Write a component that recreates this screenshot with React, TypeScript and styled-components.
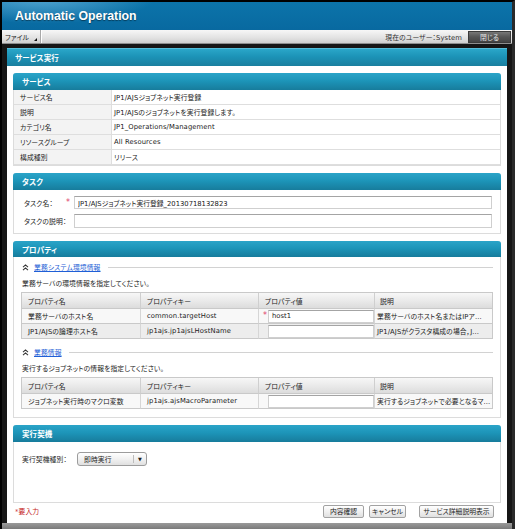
import React from 'react';
import styled, { createGlobalStyle } from 'styled-components';

const GlobalStyle = createGlobalStyle`
  html, body { margin: 0; padding: 0; background: #fff; }
  body {
    font-family: "DejaVu Sans", "Noto Sans CJK JP", sans-serif;
    font-size: 6.8px;
    letter-spacing: 0.1px;
    color: #222;
    font-feature-settings: "palt";
  }
  * { box-sizing: border-box; }
`;

const Frame = styled.div`
  width: 515px;
  height: 529px;
  background: #161616;
  border-top: 2px solid #000;
  border-left: 2px solid #000;
  border-right: 3px solid #2a2a2a;
  display: flex;
  flex-direction: column;
  overflow: hidden;
`;

const Header = styled.header`
  flex: none;
  height: 28px;
  display: flex;
  align-items: center;
  padding-left: 13px;
  background:
    radial-gradient(ellipse 150px 34px at 40px -4px, rgba(140, 205, 240, 0.55), rgba(140, 205, 240, 0) 75%),
    linear-gradient(180deg, #0c74aa 0%, #0869a0 100%);
`;

const Title = styled.h1`
  margin: 0;
  font: bold 12.3px "Liberation Sans", Arial, sans-serif;
  letter-spacing: 0;
  color: #fff;
  text-shadow: 0 1px 1px rgba(0, 0, 0, 0.45);
`;

const MenuBar = styled.div`
  flex: none;
  height: 14px;
  display: flex;
  align-items: stretch;
  background: linear-gradient(180deg, #f7f7f7 0%, #e2e2e2 60%, #cfcfcf 100%);
  border-bottom: 1px solid #8e8e8e;
`;

const MenuItem = styled.div`
  position: relative;
  width: 39px;
  display: flex;
  align-items: center;
  padding-left: 3px;
  color: #222;
  border-right: 1px solid #a8a8a8;
  box-shadow: 1px 0 0 #fff;
`;

const MenuArrow = styled.span`
  position: absolute;
  right: 3px;
  bottom: 2px;
  width: 0;
  height: 0;
  border-left: 3px solid transparent;
  border-bottom: 3px solid #111;
`;

const MenuSpacer = styled.div`
  flex: 1;
`;

const UserText = styled.div`
  display: flex;
  align-items: center;
  margin-right: 6px;
  color: #333;
`;

const CloseButton = styled.button`
  align-self: center;
  width: 43px;
  height: 12px;
  margin-right: 1px;
  padding: 0;
  font: inherit;
  color: #e8e8e8;
  border: 1px solid #3a3a3a;
  background: linear-gradient(180deg, #777 0%, #555 50%, #444 100%);
`;

const ContentArea = styled.div`
  flex: 1;
  display: flex;
  flex-direction: column;
  padding: 4px 5px 0 5px;
  min-height: 0;
`;

const Panel = styled.div`
  flex: 1;
  display: flex;
  flex-direction: column;
  background: #fff;
`;

const PanelTitle = styled.div`
  flex: none;
  height: 18px;
  display: flex;
  align-items: center;
  padding-left: 8px;
  color: #fff;
  font-size: 7.5px;
  font-weight: bold;
  background: linear-gradient(180deg, #2aa6c9 0%, #1c93b7 45%, #1a7f9f 100%);
  border-top: 1px solid #55bcd8;
`;

const PanelBody = styled.div`
  flex: 1;
  display: flex;
  flex-direction: column;
  gap: 7px;
  padding: 7px 6px 0;
`;

const Section = styled.section`
  border: 1px solid #dcdcdc;
  border-top: none;
  border-radius: 3px 3px 0 0;
  background: #fff;
`;

const SectionHeader = styled.div`
  height: 16.5px;
  margin: 0 -1px;
  display: flex;
  align-items: center;
  padding-left: 9px;
  color: #fff;
  font-size: 7.5px;
  font-weight: bold;
  border-radius: 3px 3px 0 0;
  background: linear-gradient(180deg, #2ba4c8 0%, #1d95b9 45%, #177c9c 100%);
`;

const InfoGrid = styled.div`
  display: grid;
  grid-template-columns: 98px 1fr;
`;

const InfoLabel = styled.div`
  height: 15.2px;
  display: flex;
  align-items: center;
  padding-left: 6px;
  white-space: nowrap;
  background: #f3f3f3;
  border-bottom: 1px solid #dedede;
  border-right: 1px solid #dedede;
`;

const InfoValue = styled.div`
  height: 15.2px;
  display: flex;
  align-items: center;
  padding-left: 2px;
  white-space: nowrap;
  border-bottom: 1px solid #dedede;
`;

const TaskBody = styled.div`
  display: flex;
  flex-direction: column;
  gap: 5px;
  padding: 6px 8px 5px 10px;
`;

const FormRow = styled.div`
  display: grid;
  grid-template-columns: 42px 8px 1fr;
  align-items: center;
`;

const FormLabel = styled.span`
  white-space: nowrap;
`;

const Asterisk = styled.span`
  color: #e0406a;
  font-size: 8px;
  line-height: 1;
`;

const TextInput = styled.input`
  width: 100%;
  height: 13.5px;
  padding: 0 3px;
  font: inherit;
  color: #222;
  background: #fff;
  border: 1px solid #cfcfcf;
  border-top-color: #a4a4a4;
  outline: none;
`;

const PropBody = styled.div`
  display: flex;
  flex-direction: column;
  padding: 4px 7px 8px 7px;
`;

const GroupHeader = styled.div<{ $top?: number }>`
  height: 12px;
  display: flex;
  align-items: center;
  margin-top: ${p => p.$top ?? 0}px;
  padding-left: 1px;
`;

const GroupLink = styled.a`
  margin-left: 5px;
  color: #1f5fd6;
  text-decoration: underline;
  cursor: pointer;
`;

const GroupLine = styled.div`
  flex: 1;
  height: 1px;
  margin-left: 7px;
  background: #d2d2d2;
`;

const GroupDesc = styled.div`
  height: 12px;
  display: flex;
  align-items: center;
  margin-top: 4px;
  padding-left: 1px;
`;

const PropTable = styled.div`
  display: grid;
  grid-template-columns: 119px 118px 116px 1fr;
  margin-top: 3px;
  border: 1px solid #c9c9c9;
  border-bottom: none;
`;

const HeadCell = styled.div`
  height: 16px;
  display: flex;
  align-items: center;
  padding-left: 6px;
  background: linear-gradient(180deg, #f7f7f7 0%, #e9e9e9 55%, #dcdcdc 100%);
  border-right: 1px solid #cfcfcf;
  border-bottom: 1px solid #c9c9c9;
  &:nth-child(4n) { border-right: none; padding-left: 5px; }
`;

const Cell = styled.div<{ $alt?: boolean; $pad?: number }>`
  height: 15px;
  display: flex;
  align-items: center;
  padding-left: ${p => p.$pad ?? 6}px;
  white-space: nowrap;
  overflow: hidden;
  background: ${p => (p.$alt ? '#ededed' : '#f8f8f8')};
  border-right: 1px solid #d6d6d6;
  border-bottom: 1px solid #c9c9c9;
  &:nth-child(4n) { border-right: none; }
`;

const MarkSlot = styled.span`
  width: 5px;
  flex: none;
  display: flex;
  align-items: center;
`;

const CellInput = styled(TextInput)`
  flex: 1;
  height: 13px;
  width: auto;
`;

const ExecBody = styled.div`
  height: 60px;
  display: flex;
  align-items: flex-start;
  padding: 10px 0 0 8px;
`;

const ExecLabel = styled.span`
  width: 55px;
  height: 14px;
  display: flex;
  align-items: center;
  white-space: nowrap;
`;

const Select = styled.div`
  width: 70px;
  height: 14px;
  display: flex;
  align-items: stretch;
  border: 1px solid #9c9c9c;
  border-radius: 3px;
  background: linear-gradient(180deg, #ffffff 0%, #f1f1f1 50%, #e0e0e0 100%);
`;

const SelectText = styled.span`
  flex: 1;
  display: flex;
  align-items: center;
  padding-left: 6px;
`;

const SelectArrow = styled.span`
  width: 13px;
  display: flex;
  align-items: center;
  justify-content: center;
  border-left: 1px solid #bdbdbd;
  margin: 2px 0;
  font-size: 5px;
  color: #222;
`;

const Footer = styled.div`
  display: flex;
  align-items: center;
  height: 16px;
  margin-top: -6.5px;
  padding: 0 7px 0 2px;
`;

const Required = styled.span`
  color: #c41a1a;
`;

const Buttons = styled.div`
  margin-left: auto;
  display: flex;
  align-items: center;
`;

const Button = styled.button<{ $w: number; $gap?: number }>`
  width: ${p => p.$w}px;
  height: 12.5px;
  margin-left: ${p => p.$gap ?? 0}px;
  padding: 0;
  font: inherit;
  color: #222;
  white-space: nowrap;
  border: 1px solid #a2a2a2;
  border-radius: 2px;
  background: linear-gradient(180deg, #ffffff 0%, #f0f0f0 50%, #e0e0e0 100%);
`;

const BottomStrip = styled.div`
  flex: none;
  height: 6px;
  margin: 0 -5px;
  background: linear-gradient(180deg, #9a9a9a, #7a7a7a);
`;

const CollapseIcon = () => (
  <svg width="7" height="7" viewBox="0 0 7 7" fill="none" stroke="#333" strokeWidth="1.1">
    <polyline points="1,3.2 3.5,0.9 6,3.2" />
    <polyline points="1,6.2 3.5,3.9 6,6.2" />
  </svg>
);

type PropRow = { name: string; key: string; value: string; required: boolean; desc: string };

const group1: PropRow[] = [
  { name: '業務サーバのホスト名', key: 'common.targetHost', value: 'host1', required: true, desc: '業務サーバのホスト名またはIPア...' },
  { name: 'JP1/AJSの論理ホスト名', key: 'jp1ajs.jp1ajsLHostName', value: '', required: false, desc: 'JP1/AJSがクラスタ構成の場合，J...' },
];

const group2: PropRow[] = [
  { name: 'ジョブネット実行時のマクロ変数', key: 'jp1ajs.ajsMacroParameter', value: '', required: false, desc: '実行するジョブネットで必要となるマ...' },
];

const PropertyTable = ({ rows }: { rows: PropRow[] }) => (
  <PropTable>
    <HeadCell>プロパティ名</HeadCell>
    <HeadCell>プロパティキー</HeadCell>
    <HeadCell>プロパティ値</HeadCell>
    <HeadCell>説明</HeadCell>
    {rows.map((r, i) => {
      const alt = i % 2 === 1;
      return (
        <React.Fragment key={r.key}>
          <Cell $alt={alt}>{r.name}</Cell>
          <Cell $alt={alt}>{r.key}</Cell>
          <Cell $alt={alt} $pad={4}>
            <MarkSlot>{r.required && <Asterisk>*</Asterisk>}</MarkSlot>
            <CellInput defaultValue={r.value} />
          </Cell>
          <Cell $alt={alt} $pad={2}>{r.desc}</Cell>
        </React.Fragment>
      );
    })}
  </PropTable>
);

const info: [string, string][] = [
  ['サービス名', 'JP1/AJSジョブネット実行登録'],
  ['説明', 'JP1/AJSのジョブネットを実行登録します。'],
  ['カテゴリ名', 'JP1_Operations/Management'],
  ['リソースグループ', 'All Resources'],
  ['構成種別', 'リリース'],
];

export default function App() {
  return (
    <>
      <GlobalStyle />
      <Frame>
        <Header>
          <Title>Automatic Operation</Title>
        </Header>
        <MenuBar>
          <MenuItem>
            ファイル
            <MenuArrow />
          </MenuItem>
          <MenuSpacer />
          <UserText>現在のユーザー：System</UserText>
          <CloseButton>閉じる</CloseButton>
        </MenuBar>
        <ContentArea>
          <Panel>
            <PanelTitle>サービス実行</PanelTitle>
            <PanelBody>
              <Section>
                <SectionHeader>サービス</SectionHeader>
                <InfoGrid>
                  {info.map(([k, v]) => (
                    <React.Fragment key={k}>
                      <InfoLabel>{k}</InfoLabel>
                      <InfoValue>{v}</InfoValue>
                    </React.Fragment>
                  ))}
                </InfoGrid>
              </Section>

              <Section>
                <SectionHeader>タスク</SectionHeader>
                <TaskBody>
                  <FormRow>
                    <FormLabel>タスク名：</FormLabel>
                    <Asterisk>*</Asterisk>
                    <TextInput defaultValue="JP1/AJSジョブネット実行登録_20130718132823" />
                  </FormRow>
                  <FormRow>
                    <FormLabel>タスクの説明：</FormLabel>
                    <span />
                    <TextInput defaultValue="" />
                  </FormRow>
                </TaskBody>
              </Section>

              <Section>
                <SectionHeader>プロパティ</SectionHeader>
                <PropBody>
                  <GroupHeader>
                    <CollapseIcon />
                    <GroupLink>業務システム環境情報</GroupLink>
                    <GroupLine />
                  </GroupHeader>
                  <GroupDesc>業務サーバの環境情報を指定してください。</GroupDesc>
                  <PropertyTable rows={group1} />
                  <GroupHeader $top={7}>
                    <CollapseIcon />
                    <GroupLink>業務情報</GroupLink>
                    <GroupLine />
                  </GroupHeader>
                  <GroupDesc>実行するジョブネットの情報を指定してください。</GroupDesc>
                  <PropertyTable rows={group2} />
                </PropBody>
              </Section>

              <Section>
                <SectionHeader>実行契機</SectionHeader>
                <ExecBody>
                  <ExecLabel>実行契機種別：</ExecLabel>
                  <Select>
                    <SelectText>即時実行</SelectText>
                    <SelectArrow>▼</SelectArrow>
                  </Select>
                </ExecBody>
              </Section>

              <Footer>
                <Required>*要入力</Required>
                <Buttons>
                  <Button $w={41}>内容確認</Button>
                  <Button $w={37} $gap={5}>キャンセル</Button>
                  <Button $w={75} $gap={13}>サービス詳細説明表示</Button>
                </Buttons>
              </Footer>
            </PanelBody>
          </Panel>
          <BottomStrip />
        </ContentArea>
      </Frame>
    </>
  );
}
